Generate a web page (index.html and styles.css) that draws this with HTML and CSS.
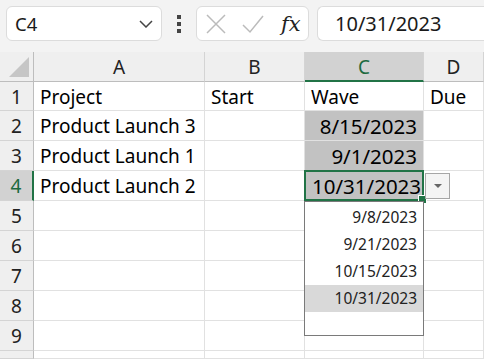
FILE: index.html
```
<!DOCTYPE html>
<html lang="en">
<head>
	<meta charset="UTF-8">
	<title>Sheet</title>
	<link rel="stylesheet" href="styles.css">
</head>
<body>
	<div class="toolbar">
		<div class="namebox">
			<span>C4</span>
			<svg width="14" height="8" viewBox="0 0 14 8"><path d="M1 1 L7 7 L13 1" fill="none" stroke="#444" stroke-width="1.5"/></svg>
		</div>
		<div class="dots"><i></i><i></i><i></i></div>
		<div class="fxbtns">
			<svg width="22" height="22" viewBox="0 0 22 22"><path d="M2 2 L20 20 M20 2 L2 20" stroke="#bbb" stroke-width="1.5"/></svg>
			<svg width="24" height="22" viewBox="0 0 24 22"><path d="M2 12 L9 19 L22 3" fill="none" stroke="#bbb" stroke-width="1.5"/></svg>
			<span class="fx">fx</span>
		</div>
		<div class="formula">10/31/2023</div>
	</div>
	<div class="sheet">
		<div class="corner"></div>
		<div class="colh">A</div>
		<div class="colh">B</div>
		<div class="colh sel">C</div>
		<div class="colh">D</div>

		<div class="rowh">1</div>
		<div class="cell">Project</div>
		<div class="cell">Start</div>
		<div class="cell">Wave</div>
		<div class="cell">Due</div>

		<div class="rowh">2</div>
		<div class="cell">Product Launch 3</div>
		<div class="cell"></div>
		<div class="cell num hi">8/15/2023</div>
		<div class="cell"></div>

		<div class="rowh">3</div>
		<div class="cell">Product Launch 1</div>
		<div class="cell"></div>
		<div class="cell num hi">9/1/2023</div>
		<div class="cell"></div>

		<div class="rowh sel">4</div>
		<div class="cell">Product Launch 2</div>
		<div class="cell"></div>
		<div class="cell num hi active">10/31/2023</div>
		<div class="cell"></div>

		<div class="rowh">5</div><div class="cell"></div><div class="cell"></div><div class="cell"></div><div class="cell"></div>
		<div class="rowh">6</div><div class="cell"></div><div class="cell"></div><div class="cell"></div><div class="cell"></div>
		<div class="rowh">7</div><div class="cell"></div><div class="cell"></div><div class="cell"></div><div class="cell"></div>
		<div class="rowh">8</div><div class="cell"></div><div class="cell"></div><div class="cell"></div><div class="cell"></div>
		<div class="rowh">9</div><div class="cell"></div><div class="cell"></div><div class="cell"></div><div class="cell"></div>
		<div class="rowh"></div><div class="cell"></div><div class="cell"></div><div class="cell"></div><div class="cell"></div>

		<div class="ddbtn"><svg width="10" height="6" viewBox="0 0 10 6"><path d="M1 1 L9 1 L5 5 Z" fill="#666"/></svg></div>
		<ul class="ddlist">
			<li>9/8/2023</li>
			<li>9/21/2023</li>
			<li>10/15/2023</li>
			<li class="cur">10/31/2023</li>
		</ul>
	</div>
</body>
</html>
```
FILE: styles.css
```
*{
	margin: 0;
	padding: 0;
	box-sizing: border-box;
	list-style: none;
}
body{
	background: #f3f3f3;
	font-family: "Noto Sans", "Open Sans", sans-serif;
	color: #000;
	width: 484px;
	height: 359px;
	overflow: hidden;
}
.toolbar{
	height: 52px;
	display: flex;
	padding: 6px 0 0 6px;
}
.namebox{
	width: 156px;
	height: 35px;
	background: #fff;
	border: 1px solid #dcdcdc;
	border-radius: 6px;
	display: flex;
	align-items: center;
	justify-content: space-between;
	padding: 0 8px 0 8px;
	font-size: 18.5px;
	color: #1a1a1a;
}
.dots{
	width: 34px;
	display: flex;
	flex-direction: column;
	align-items: center;
	justify-content: center;
	gap: 3px;
	height: 35px;
}
.dots i{
	width: 4px;
	height: 4px;
	background: #444;
	display: block;
}
.fxbtns{
	width: 113px;
	height: 35px;
	background: #fff;
	border: 1px solid #dcdcdc;
	border-radius: 6px;
	display: flex;
	align-items: center;
	padding: 0 6px 0 8px;
	gap: 14px;
}
.fx{
	font-family: "DejaVu Serif", "Liberation Serif", serif;
	font-style: italic;
	font-size: 21px;
	color: #222;
	margin-left: 2px;
}
.formula{
	flex: 1;
	margin-left: 8px;
	height: 35px;
	background: #fff;
	border: 1px solid #dcdcdc;
	border-right: none;
	border-radius: 6px 0 0 6px;
	font-size: 20px;
	line-height: 33px;
	padding-left: 17px;
	color: #1a1a1a;
}
.sheet{
	position: relative;
	display: grid;
	grid-template-columns: 34px 171px 100px 119px 60px;
	grid-template-rows: 30px 29px repeat(8, 30px) 8px;
	background: #fff;
	font-size: 19px;
}
.corner{
	background: #efefef;
	border-right: 1px solid #bdbdbd;
	border-bottom: 1px solid #bdbdbd;
	position: relative;
}
.corner::after{
	content: "";
	position: absolute;
	right: 4px;
	bottom: 4px;
	border-left: 20px solid transparent;
	border-bottom: 20px solid #c6c6c6;
}
.colh{
	background: #efefef;
	border-right: 1px solid #d4d4d4;
	border-bottom: 1px solid #bdbdbd;
	text-align: center;
	line-height: 30px;
	color: #222;
}
.colh.sel{
	background: #d2d2d2;
	color: #1d6a40;
	border-bottom: 2px solid #217346;
}
.rowh{
	background: #efefef;
	border-right: 1px solid #bdbdbd;
	border-bottom: 1px solid #d4d4d4;
	text-align: center;
	line-height: 30px;
	color: #222;
}
.rowh.sel{
	background: #d2d2d2;
	color: #1d6a40;
	border-right: 2px solid #217346;
}
.cell{
	border-right: 1px solid #e1e1e1;
	border-bottom: 1px solid #e1e1e1;
	line-height: 30px;
	padding: 0 6px;
	white-space: nowrap;
	overflow: hidden;
}
.cell.num{
	text-align: right;
	font-size: 20.5px;
}
.cell.hi{
	background: #c2c2c2;
}
.cell.active{
	border: 2px solid #217346;
	margin: -1px 0 0 -1px;
	line-height: 28px;
	padding-right: 4px;
	position: relative;
	overflow: visible;
}
.cell.active::after{
	content: "";
	position: absolute;
	right: -5px;
	bottom: -5px;
	width: 7px;
	height: 7px;
	background: #217346;
	border: 1px solid #fff;
}
.ddbtn{
	position: absolute;
	left: 425px;
	top: 121px;
	width: 25px;
	height: 26px;
	background: #f4f4f4;
	border: 1px solid #a6a6a6;
	display: flex;
	align-items: center;
	justify-content: center;
}
.ddlist{
	position: absolute;
	left: 304px;
	top: 149px;
	width: 120px;
	height: 135px;
	background: #fff;
	border: 1px solid #7a7a7a;
	padding-top: 2px;
	font-size: 15.5px;
	color: #222;
}
.ddlist li{
	height: 27px;
	line-height: 27px;
	text-align: right;
	padding-right: 6px;
}
.ddlist li.cur{
	background: #d9d9d9;
}
```
